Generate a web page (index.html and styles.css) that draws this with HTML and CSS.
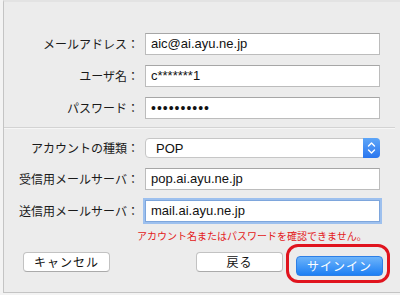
FILE: index.html
```html
<!DOCTYPE html>
<html lang="ja">
<head>
    <meta charset="UTF-8">
    <meta name="viewport" content="width=device-width, initial-scale=1.0">
    <title>アカウントの追加</title>
    <link rel="stylesheet" href="styles.css">
</head>
<body>

    <div class="dialog">

        <!-- Account fields -->
        <div class="group account">
            <div class="row">
                <span class="label">メールアドレス：</span>
                <div class="field">aic@ai.ayu.ne.jp</div>
            </div>
            <div class="row">
                <span class="label">ユーザ名：</span>
                <div class="field">c*******1</div>
            </div>
            <div class="row">
                <span class="label">パスワード：</span>
                <div class="field dots">••••••••••</div>
            </div>
        </div>

        <div class="divider"></div>

        <!-- Server fields -->
        <div class="group servers">
            <div class="row">
                <span class="label">アカウントの種類：</span>
                <div class="select">
                    <span class="select-value">POP</span>
                    <span class="stepper">
                        <svg width="9" height="14" viewBox="0 0 9 14">
                            <path d="M1.5 5 L4.5 2 L7.5 5 M1.5 9 L4.5 12 L7.5 9" fill="none" stroke="#fff" stroke-width="1.4" stroke-linecap="round" stroke-linejoin="round"/>
                        </svg>
                    </span>
                </div>
            </div>
            <div class="row">
                <span class="label">受信用メールサーバ：</span>
                <div class="field">pop.ai.ayu.ne.jp</div>
            </div>
            <div class="row">
                <span class="label">送信用メールサーバ：</span>
                <div class="field focused">mail.ai.ayu.ne.jp</div>
            </div>
        </div>

        <p class="error">アカウント名またはパスワードを確認できません。</p>

        <!-- Buttons -->
        <div class="actions">
            <button class="btn">キャンセル</button>
            <div class="actions-right">
                <button class="btn">戻る</button>
                <div class="highlight">
                    <button class="btn primary">サインイン</button>
                </div>
            </div>
        </div>

    </div>

</body>
</html>
```

FILE: styles.css
```css
/* General styles */
body {
    margin: 0;
    padding: 0;
    background-color: #f3f3f3;
    font-family: "Noto Sans CJK JP", sans-serif;
    color: #1e1e1e;
}

/* Dialog window */
.dialog {
    margin-left: 3px;
    box-sizing: border-box;
    height: 293px;
    background-color: #ececec;
    border-left: 1px solid #c4c4c4;
    border-top: 2px solid #e3e3e3;
    border-bottom: 1px solid #c4c4c4;
    display: flex;
    flex-direction: column;
}

/* Form rows */
.group {
    display: flex;
    flex-direction: column;
    gap: 10px;
}
.account {
    margin-top: 31px;
}
.servers {
    margin-top: 9px;
}
.row {
    display: flex;
    align-items: center;
    gap: 6px;
}
.label {
    width: 135px;
    text-align: right;
    font-size: 12px;
    line-height: 16px;
    white-space: nowrap;
    color: #1a1a1a;
}

/* Text fields */
.field {
    width: 235px;
    height: 22px;
    box-sizing: border-box;
    padding: 0 5px;
    background-color: #fff;
    border: 1px solid #bcbcbc;
    border-top-color: #a6a6a6;
    font-family: "Liberation Sans", Arial, sans-serif;
    font-size: 13px;
    line-height: 20px;
    color: #111;
}
.dots {
    font-size: 14px;
    letter-spacing: 1px;
}
.focused {
    border-color: #7ea6dc;
    box-shadow: 0 0 0 2px #9dc0ee;
}

.divider {
    margin: 8px 5px 0 0;
    height: 1px;
    background-color: #d3d3d3;
    border-bottom: 1px solid #f6f6f6;
}

/* Popup select */
.select {
    width: 235px;
    height: 20px;
    box-sizing: border-box;
    display: flex;
    align-items: center;
    justify-content: space-between;
    background-color: #fff;
    border: 1px solid #c6c6c6;
    border-radius: 4px;
    font-family: "Liberation Sans", Arial, sans-serif;
    font-size: 13px;
    color: #111;
}
.select-value {
    padding-left: 10px;
}
.stepper {
    width: 17px;
    height: 20px;
    margin-right: -1px;
    display: flex;
    align-items: center;
    justify-content: center;
    background: linear-gradient(#5ea6f8, #2a76ef);
    border-radius: 0 4px 4px 0;
}

/* Error message */
.error {
    margin: 7px 0 0 133px;
    font-size: 10px;
    line-height: 14px;
    color: #e32020;
    white-space: nowrap;
}

/* Buttons */
.actions {
    margin-top: 9px;
    padding: 0 17px 0 19px;
    display: flex;
    justify-content: space-between;
}
.actions-right {
    display: flex;
    gap: 13px;
}
.btn {
    width: 87px;
    height: 20px;
    padding: 0;
    background-color: #fff;
    border: 1px solid #c2c2c2;
    border-bottom-color: #aaa;
    border-radius: 4px;
    font-family: "Noto Sans CJK JP", sans-serif;
    font-size: 12px;
    line-height: 18px;
    letter-spacing: 1px;
    color: #111;
}
.btn.primary {
    background: linear-gradient(#6db4fa, #1d7ff4);
    border-color: #2d7fe6;
    color: #fff;
}
.highlight {
    position: relative;
}
.highlight::after {
    content: "";
    position: absolute;
    top: -8px;
    right: -7px;
    bottom: -7px;
    left: -10px;
    border: 3px solid #e0141e;
    border-radius: 12px;
}
```
